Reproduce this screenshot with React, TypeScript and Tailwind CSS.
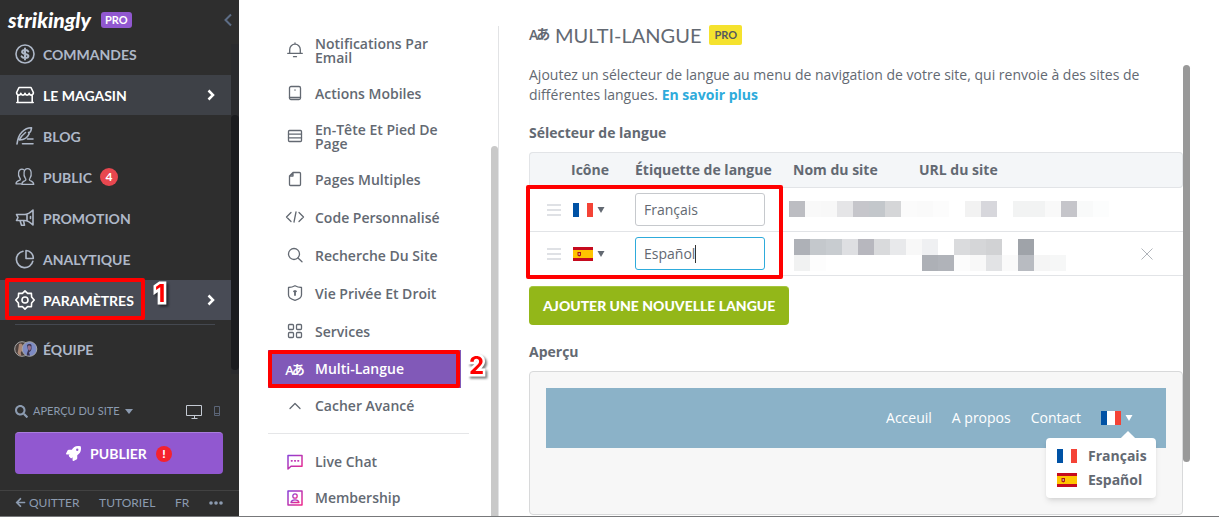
import React, { useState } from 'react';
import { FaArrowLeft, FaRocket, FaSearch } from 'react-icons/fa';

interface NavItem {
  label: string;
  icon: React.ReactNode;
  active?: string;
  count?: number;
}

interface SettingItem {
  label: string;
  icon: React.ReactNode;
}

const line = {
  fill: 'none',
  stroke: 'currentColor',
  strokeWidth: 1.6,
  strokeLinejoin: 'round' as const,
  strokeLinecap: 'round' as const,
};

const thin = { ...line, strokeWidth: 1.3 };

function TranslateIcon() {
  return (
    <span aria-hidden="true" className="font-['Open_Sans','Noto_Sans_CJK_JP',sans-serif] leading-4 font-semibold whitespace-nowrap">
      A<span className="-ml-0.5 align-[1px]">あ</span>
    </span>
  );
}

const navItems: NavItem[] = [
  {
    label: 'COMMANDES',
    icon: (
      <svg width="20" height="20" viewBox="0 0 20 20" {...line}>
        <circle cx="10" cy="10" r="9" />
        <path d="M13.3 7.4c-.5-.9-1.6-1.3-3.1-1.3-1.8 0-3.1.6-3.1 1.9 0 2.8 6.3 1.1 6.3 4 0 1.3-1.4 1.9-3.3 1.9-1.7 0-2.9-.5-3.5-1.5M10 4.400v11.200" strokeWidth="2" />
      </svg>
    ),
  },
  {
    label: 'LE MAGASIN',
    active: 'bg-[#3e4147]',
    icon: (
      <svg width="20" height="20" viewBox="0 0 20 20" {...line}>
        <path d="M4 2.500h12l2.400 5c0 3.200-3.900 3.400-4.200.7-.4 2.500-3.900 2.500-4.200 0-.3 2.500-3.800 2.500-4.200 0C5.500 10.900 1.600 10.700 1.600 7.500zM2.800 10.500v7h14.400v-7M1.800 17.500h16.400" />
      </svg>
    ),
  },
  {
    label: 'BLOG',
    icon: (
      <svg width="20" height="20" viewBox="0 0 20 20" {...line}>
        <path d="M2 18c.5-4 1.500-8.500 5-12 3-3 6.500-4.300 9.500-4.200-.3 1.300-.2 3-1.300 4.200l-1.600.5.6 1.300c-1.500 3.500-5 6-9.700 6.200M4.500 13.500C6 10.500 8 8.500 10.500 6.500M12.500 13H18M7.500 17.800H18" />
      </svg>
    ),
  },
  {
    label: 'PUBLIC',
    count: 4,
    icon: (
      <svg width="20" height="20" viewBox="0 0 20 20" {...thin}>
        <path d="M1 16.800c0-2.300 1.300-2.600 3.800-3.600.8-.4.6-1.500 0-2.200C3.500 9.500 3.300 7 3.600 5.300 4 3.200 5.200 2.200 6.900 2.200c.8 0 1.500.2 2 .7M1 16.800h5" />
        <path d="M6.800 17.400c0-2.800 1.500-3 3.500-3.900.8-.4.7-1.500.1-2.200-1.200-1.500-1.700-4-1.300-6.200.4-2.300 1.700-3.500 3.500-3.500s3.100 1.200 3.500 3.500c.4 2.200-.1 4.700-1.200 6.200-.6.7-.7 1.800.1 2.200 2.200.9 3.700 1.100 3.700 3.900z" />
      </svg>
    ),
  },
  {
    label: 'PROMOTION',
    icon: (
      <svg width="20" height="20" viewBox="0 0 20 20" {...line}>
        <path d="M1.500 6.500h8c3 0 5.500-1.500 8.500-4.500v15c-3-3-5.500-4.500-8.500-4.500h-8l1.500-3zM5 12.500l1.500 4.800h3l-1-4.800M12 6v6.500M15.500 8.500v2" />
      </svg>
    ),
  },
  {
    label: 'ANALYTIQUE',
    icon: (
      <svg width="20" height="20" viewBox="0 0 20 20" {...line}>
        <path d="M8 2.200a8.300 8.300 0 1 0 9.800 10M11 1.500v8h7.300A7.600 7.600 0 0 0 11 1.500z" />
      </svg>
    ),
  },
  {
    label: 'PARAMÈTRES',
    active: 'bg-[#484b55]',
    icon: (
      <svg width="20" height="20" viewBox="0 0 20 20" {...line}>
        <path d="M10 .9l2.600 2.500 3.800-.1.2 3.700 2.600 3-2.600 3-.2 3.700-3.800-.1L10 19.100l-2.600-2.500-3.800.1-.2-3.700L.8 10l2.600-3 .2-3.700 3.800.1z" />
        <circle cx="10" cy="10" r="3" />
      </svg>
    ),
  },
];

const settings: SettingItem[] = [
  {
    label: 'Notifications Par Email',
    icon: (
      <svg width="16" height="16" viewBox="0 0 16 16" {...thin}>
        <path d="M.7 11.300h14.600M2.700 11V7.500a5.300 5.300 0 0 1 10.600 0V11M8 1.800V1M6.500 14.700h3" />
      </svg>
    ),
  },
  {
    label: 'Actions Mobiles',
    icon: (
      <svg width="16" height="16" viewBox="0 0 16 16" {...thin}>
        <rect x="2.500" y="1.500" width="11" height="13" rx="1.500" />
        <path d="M2.500 12.500h11M8 4.800v.4" />
      </svg>
    ),
  },
  {
    label: 'En-Tête Et Pied De Page',
    icon: (
      <svg width="16" height="16" viewBox="0 0 16 16" {...thin}>
        <rect x="1.500" y="2.500" width="13" height="11" rx="1" />
        <path d="M1.500 6.200h13M1.500 9.800h13" />
      </svg>
    ),
  },
  {
    label: 'Pages Multiples',
    icon: (
      <svg width="16" height="16" viewBox="0 0 16 16" {...thin}>
        <path d="M6 1.500h6.500a1 1 0 0 1 1 1v11a1 1 0 0 1-1 1h-9a1 1 0 0 1-1-1V5zM6 1.500V5H2.500" />
      </svg>
    ),
  },
  {
    label: 'Code Personnalisé',
    icon: (
      <svg width="20" height="16" viewBox="0 0 20 16" {...thin}>
        <path d="M6 3.500L1.500 8 6 12.500M14 3.500L18.500 8 14 12.500M11 3L9 13" />
      </svg>
    ),
  },
  {
    label: 'Recherche Du Site',
    icon: (
      <svg width="16" height="16" viewBox="0 0 16 16" {...thin}>
        <circle cx="7" cy="7" r="5.500" />
        <path d="M11 11l4 3.700" />
      </svg>
    ),
  },
  {
    label: 'Vie Privée Et Droit',
    icon: (
      <svg width="16" height="16" viewBox="0 0 16 16" {...thin}>
        <path d="M8 .7c2 1.200 4 1.700 6.500 1.800v7.500c0 2.500-3 4.300-6.500 5.300-3.500-1-6.500-2.800-6.500-5.300V2.500C4 2.400 6 1.900 8 .7z" />
        <path d="M8 6v4M7 6.300h2" strokeWidth="1.800" />
      </svg>
    ),
  },
  {
    label: 'Services',
    icon: (
      <svg width="16" height="16" viewBox="0 0 16 16" {...thin}>
        <rect x="1.500" y="1.500" width="5" height="5" rx="1" />
        <rect x="9.500" y="1.500" width="5" height="5" rx="1" />
        <rect x="1.500" y="9.500" width="5" height="5" rx="1" />
        <rect x="9.500" y="9.500" width="5" height="5" rx="1" />
      </svg>
    ),
  },
];

const extras: SettingItem[] = [
  {
    label: 'Live Chat',
    icon: (
      <svg width="16" height="16" viewBox="0 0 16 16" {...thin} stroke="url(#pink)">
        <path d="M1 15V1.500h14v10.700H4z" strokeWidth="1.500" />
        <path d="M4.500 6.800h.5M7.800 6.800h.5M11 6.800h.5" stroke="#c233b4" strokeWidth="1.700" />
      </svg>
    ),
  },
  {
    label: 'Membership',
    icon: (
      <svg width="16" height="16" viewBox="0 0 16 16" {...thin} stroke="url(#pink)">
        <rect x="1" y="1" width="14" height="14" strokeWidth="1.500" />
        <circle cx="8" cy="6" r="2.200" />
        <path d="M4 12.500c.5-2.300 2-2.700 4-2.700s3.500.4 4 2.700z" />
      </svg>
    ),
  },
];

// Blurred site names and addresses, one colour per 16px block
const blurRows = [
  [
    ['#bcbdc2', '#f9f9f9', '#f8f8f8', '#e5e5e7', '#c6c6cb', '#c3c7cb', '#d5d6d8', '#fbfbfb', '#fafafa', '#fcfcfc', '#fff', '#f2f2f2', '#d7d7dc', '#fff', '#f2f3f3', '#f2f3f3', '#f9f9f9', '#c5c5ca', '#f9fafa', '#fcfdfd'],
  ],
  [
    ['#aeb1b7', '#c4c8cc', '#c8ccd0', '#dedfe2', '#b7b7be', '#d9dadc', '#e8e9eb', '#f8f8f8', '#eff0f2', '#fff', '#dadbdd', '#d5d6d8', '#d1d2d4', '#fff', '#9fa3a9'],
    ['#f1f2f2', '#fdfdfd', '#fff', '#fff', '#fff', '#fff', '#fff', '#fff', '#adb0b6', '#b0b3b9', '#fcfcfc', '#f8f8f8', '#e2e3e5', '#fafafa', '#b8bbc1', '#f5f5f5', '#f6f7f7'],
  ],
];

function Flag({ code }: { code: string }) {
  if (code === 'fr') {
    return (
      <svg width="20" height="14" viewBox="0 0 20 14" shapeRendering="crispEdges">
        <path fill="#fff" d="M0 0h20v14H0z" />
        <path fill="#0052a5" d="M0 0h6v14H0z" />
        <path fill="#f44336" d="M14 0h6v14h-6z" />
      </svg>
    );
  }
  return (
    <svg width="20" height="14" viewBox="0 0 20 14">
      <path fill="#c60b1e" d="M0 0h20v14H0z" />
      <path fill="#ffc400" d="M0 3h20v8H0z" />
      <path fill="#ad1519" d="M4.500 5h3.500v3.500L6.300 9.600 4.500 8.500z" />
      <path fill="#c9a08a" d="M5.500 6h1.500v2H5.500z" />
    </svg>
  );
}

function Caret() {
  return (
    <svg width="8" height="6" viewBox="0 0 8 6" fill="currentColor">
      <path d="M.5 0h7L4 6z" />
    </svg>
  );
}

function Chevron() {
  return (
    <svg width="8" height="12" viewBox="0 0 8 12" fill="none" stroke="currentColor" strokeWidth="2.500">
      <path d="M1.500 1.500L6 6l-4.500 4.500" />
    </svg>
  );
}

function Step({ n }: { n: number }) {
  return (
    <span className="font-['Inter',sans-serif] text-2xl leading-6 font-bold text-[#f00] [-webkit-text-stroke:5px_white] [paint-order:stroke] drop-shadow-[2px_2px_1px_rgba(0,0,0,0.5)]">
      {n}
    </span>
  );
}

function SettingRow({ label, icon }: SettingItem) {
  return (
    <a href="#" className="flex min-h-[38px] items-center pt-[11px] pb-[9px]">
      <span className="-my-1 flex w-[47px] shrink-0 justify-center pb-0.5 pl-[7px]">{icon}</span>
      <span className="max-w-[140px]">{label}</span>
    </a>
  );
}

function Sidebar() {
  return (
    <aside className="flex w-[239px] shrink-0 flex-col bg-[#2e2e2e] font-['Lato',sans-serif] text-[#aeb8c8]">
      <div className="flex h-[34px] shrink-0 items-center pt-1.5 pl-2">
        <a href="#" className="w-[93px] text-[21px] leading-6 font-black text-white italic">
          strikingly
        </a>
        <span className="rounded-[3px] bg-[#9158d0] px-1 text-[11px] leading-4 font-bold text-white">PRO</span>
        <button aria-label="Réduire le menu" className="mr-[7px] ml-auto text-[#5d6d86]">
          <svg width="8" height="14" viewBox="0 0 8 14" fill="none" stroke="currentColor" strokeWidth="2">
            <path d="M7 1.500L1.500 7 7 12.500" />
          </svg>
        </button>
      </div>

      <div className="flex">
        <nav className="flex min-w-0 grow flex-col gap-px">
          {navItems.map((item) => (
            <a
              key={item.label}
              href="#"
              className={`relative flex h-10 items-center gap-2 pl-[15px] text-sm font-bold ${
                item.active ? `${item.active} text-white` : ''
              }`}
            >
              {item.icon}
              <span className="pt-0.5">{item.label}</span>
              {item.count && (
                <span className="flex size-[18px] items-center justify-center rounded-full bg-[#e8474f] text-xs text-white">
                  {item.count}
                </span>
              )}
              {item.active && (
                <span className="mr-4 ml-auto">
                  <Chevron />
                </span>
              )}
              {item.label === 'PARAMÈTRES' && (
                <>
                  <span className="absolute -top-0.5 left-[5px] h-[42px] w-[140px] rounded-[2px] border-4 border-[#f00]" />
                  <span className="absolute top-0.5 left-[155px]">
                    <Step n={1} />
                  </span>
                </>
              )}
            </a>
          ))}
          <hr className="mt-[3px] mr-4 ml-[15px] border-[#444850]" />
          <a href="#" className="flex h-12 items-center gap-[5px] pl-3.5 text-sm font-bold">
            <svg width="24" height="18" viewBox="0 0 24 18">
              <circle cx="8" cy="8" r="7.300" fill="#4b403d" stroke="#a6a6a6" />
              <path d="M5 3c2-1.500 4 0 4 3s-1 4-2 5 1 3 0 4c-3-1-4-3-3-5z" fill="#a98675" />
              <circle cx="15.500" cy="8" r="7.300" fill="#7d8bc4" stroke="#a6a6a6" />
              <path d="M13 4c1-1.500 4-1.500 4.500 0v4c-.5 2-1.500 2.500-2.500 3.500l1 3h-3c-.5-3 1-3.500 1-5.500z" fill="#3a3453" />
              <path d="M14 5c1-1 3-.5 3 1.500S16 10 15 9.500 13.500 6 14 5z" fill="#96708b" />
            </svg>
            ÉQUIPE
          </a>
        </nav>
        <div className="mt-2.5 flex w-2 flex-col bg-[#2a2b2e] pt-[71px]">
          <div className="h-[255px] rounded-full bg-[#1b1c1f]" />
        </div>
      </div>

      <div className="mt-auto flex items-center pr-[18px] pl-[15px] text-[11px] text-[#8c9bb0]">
        <button className="flex items-center gap-[5px]">
          <FaSearch size={13} />
          APERÇU DU SITE
          <svg width="8" height="5" viewBox="0 0 8 5" fill="currentColor">
            <path d="M0 0h8L4 5z" />
          </svg>
        </button>
        <button aria-label="Ordinateur" className="mr-2.5 ml-auto text-[#c4cad3]">
          <svg width="17" height="15" viewBox="0 0 17 15" fill="none" stroke="currentColor">
            <path d="M.5 1.500h15v10H.5zM5.500 14.500h6M8.500 11.500v3" />
          </svg>
        </button>
        <button aria-label="Mobile" className="text-[#5b6577]">
          <svg width="8" height="12" viewBox="0 0 8 12" fill="none" stroke="currentColor">
            <path d="M1.500 1.500h5v9h-5zM1.500 8.500h5" />
          </svg>
        </button>
      </div>
      <button className="mx-[15px] mt-[13px] mr-4 flex h-[42px] shrink-0 items-center justify-center gap-[9px] rounded border-t border-[#a97ddd] bg-[#9158d0] text-sm font-bold text-white">
        <FaRocket size={15} />
        PUBLIER
        <span className="flex size-4 items-center justify-center rounded-full bg-[#f5222d] text-xs font-black">!</span>
      </button>
      <div className="mt-4 flex h-[26px] shrink-0 items-center justify-between border-t border-[#424242] pr-4 pb-0.5 pl-[15px] text-xs text-[#8c9bb0]">
        <a href="#" className="flex items-center gap-[3px]">
          <FaArrowLeft size={11} />
          QUITTER
        </a>
        <a href="#">TUTORIEL</a>
        <a href="#">FR</a>
        <button aria-label="Plus">
          <svg width="14" height="4" viewBox="0 0 14 4" fill="currentColor">
            <circle cx="2" cy="2" r="1.800" />
            <circle cx="7" cy="2" r="1.800" />
            <circle cx="12" cy="2" r="1.800" />
          </svg>
        </button>
      </div>
    </aside>
  );
}

function SettingsMenu() {
  return (
    <div className="relative flex w-[260px] shrink-0 pt-[26px] text-sm leading-[14px] font-semibold text-[#636972]">
      <svg width="0" height="0" className="absolute">
        <linearGradient id="pink" x1="0" y1="0" x2="1" y2="1">
          <stop offset="0" stopColor="#8a3fd6" />
          <stop offset="1" stopColor="#ee2a8b" />
        </linearGradient>
      </svg>
      <nav className="ml-[29px] w-[201px]">
        {settings.map((item) => (
          <SettingRow key={item.label} {...item} />
        ))}
        <div className="relative">
          <a href="#" className="flex h-[38px] w-[193px] items-center bg-[#8159b8] text-white">
            <span className="flex w-[47px] shrink-0 justify-center pl-[7px] text-[13px]">
              <TranslateIcon />
            </span>
            Multi-Langue
          </a>
          <span className="absolute top-0 left-0 h-[38px] w-48 rounded-[2px] border-4 border-[#f00]" />
          <span className="absolute top-1 left-[201px]">
            <Step n={2} />
          </span>
        </div>
        <button className="flex h-9 items-center">
          <span className="flex w-[47px] shrink-0 justify-center pl-[7px]">
            <svg width="12" height="8" viewBox="0 0 12 8" {...thin}>
              <path d="M1 6.500l5-5 5 5" />
            </svg>
          </span>
          Cacher Avancé
        </button>
        <hr className="mt-[9px] mb-2.5 border-[#e5e6e8]" />
        {extras.map((item) => (
          <a key={item.label} href="#" className="flex h-9 items-center">
            <span className="flex w-[47px] shrink-0 justify-center pl-[7px]">{item.icon}</span>
            {item.label}
          </a>
        ))}
      </nav>
      <div className="ml-auto w-2 border-r border-[#e2e3e5] pt-[120px]">
        <div className="h-full w-[7px] rounded-t-full bg-[#c9c9c9]" />
      </div>
    </div>
  );
}

export default function App() {
  const [languages, setLanguages] = useState([
    { code: 'fr', label: 'Français' },
    { code: 'es', label: 'Español' },
  ]);

  function rename(index: number, label: string) {
    setLanguages(languages.map((lang, i) => (i === index ? { ...lang, label } : lang)));
  }

  return (
    <div className="flex h-screen flex-col overflow-hidden border-b border-[#77787a] bg-white font-['Open_Sans',sans-serif] text-sm text-[#636972]">
      <div className="flex min-h-0 grow">
        <Sidebar />
        <SettingsMenu />

        <main className="min-w-0 grow pt-[22px] pl-[30px]">
          <div className="flex h-[26px] items-center">
            <span className="w-[26px] text-sm">
              <TranslateIcon />
            </span>
            <h1 className="font-['Lato',sans-serif] text-xl">MULTI-LANGUE</h1>
            <span className="ml-2 rounded-[2px] bg-[#f5e22e] px-[5px] font-['Lato',sans-serif] text-[11px] leading-5 font-bold text-[#55585e]">
              PRO
            </span>
          </div>

          <div className="mt-[17px] flex">
            <div className="min-w-0 grow">
              <p className="max-w-[640px] leading-5">
                Ajoutez un sélecteur de langue au menu de navigation de votre site, qui renvoie à des sites de
                différentes langues.{' '}
                <a href="#" className="font-bold text-[#2eabdb]">
                  En savoir plus
                </a>
              </p>
              <h2 className="mt-[18px] leading-5 font-bold">Sélecteur de langue</h2>

              <div className="relative mt-[9px]">
                <table className="w-full table-fixed border-separate border-spacing-0">
                  <thead>
                    <tr className="h-9 bg-[#f4f6f8] text-left">
                      <th className="w-[42px] rounded-l border-y border-l border-[#e2e4e7]" />
                      <th className="w-16 border-y border-[#e2e4e7]">Icône</th>
                      <th className="w-[158px] border-y border-[#e2e4e7]">Étiquette de langue</th>
                      <th className="w-[126px] border-y border-[#e2e4e7]">Nom du site</th>
                      <th className="border-y border-[#e2e4e7]">URL du site</th>
                      <th className="w-[42px] rounded-r border-y border-r border-[#e2e4e7]" />
                    </tr>
                  </thead>
                  <tbody>
                    {languages.map((lang, i) => (
                      <tr key={lang.code} className="h-11">
                        <td className="border-b border-[#e2e4e7] pl-[18px] text-[#dfe1e5]">
                          <svg width="14" height="13" viewBox="0 0 14 13" fill="currentColor" shapeRendering="crispEdges">
                            <path d="M0 1h14v2H0zM0 6h14v2H0zM0 11h14v2H0z" />
                          </svg>
                        </td>
                        <td className="border-b border-[#e2e4e7]">
                          <button aria-label="Choisir le drapeau" className="flex items-center gap-1 pl-0.5">
                            <Flag code={lang.code} />
                            <Caret />
                          </button>
                        </td>
                        <td className="border-b border-[#e2e4e7]">
                          <div className="relative w-[130px]">
                            <input
                              aria-label="Étiquette de langue"
                              value={lang.label}
                              onChange={(e) => rename(i, e.target.value)}
                              className={`block h-[33px] w-full rounded-[3px] border bg-white px-2 outline-none ${
                                i === 1 ? 'border-[#2eabdb]' : 'border-[#c6c9cd]'
                              }`}
                            />
                            {i === 1 && <span className="absolute top-2 left-[60px] h-[18px] w-px bg-[#333]" />}
                          </div>
                        </td>
                        <td colSpan={2} className="border-b border-[#e2e4e7]">
                          <div className={i === 0 ? '-ml-1 pb-0.5' : 'ml-px pt-0.5'}>
                            {blurRows[i].map((row, r) => (
                              <div key={r} className="flex">
                                {row.map((color, c) => (
                                  <span key={c} className="size-4 shrink-0" style={{ backgroundColor: color }} />
                                ))}
                              </div>
                            ))}
                          </div>
                        </td>
                        <td className="border-b border-[#e2e4e7] text-[#b0b4ba]">
                          {i > 0 && (
                            <button aria-label="Supprimer" className="block">
                              <svg width="12" height="12" viewBox="0 0 12 12" fill="none" stroke="currentColor">
                                <path d="M.5.5l11 11M11.500.5l-11 11" />
                              </svg>
                            </button>
                          )}
                        </td>
                      </tr>
                    ))}
                  </tbody>
                </table>
                <span className="pointer-events-none absolute top-[33px] -left-[3px] h-[94px] w-[257px] rounded-[2px] border-4 border-[#f00]" />
              </div>

              <button className="mt-2.5 h-[39px] rounded border-t border-[#a5c63f] bg-[#93b719] px-3.5 font-['Lato',sans-serif] text-sm font-black text-white">
                AJOUTER UNE NOUVELLE LANGUE
              </button>

              <h2 className="mt-[17px] leading-5 font-bold">Aperçu</h2>
              <div className="mt-[9px] h-[144px] rounded border border-[#d8d9da] bg-[#f7f7f7] p-4">
                <div className="relative flex h-[60px] items-center justify-end gap-5 bg-[#8bb2c8] pr-[33px] font-medium text-white">
                  <a href="#">Acceuil</a>
                  <a href="#">A propos</a>
                  <a href="#">Contact</a>
                  <button aria-label="Langue" className="flex items-center gap-1">
                    <Flag code="fr" />
                    <Caret />
                  </button>
                  <div className="absolute top-[50px] right-2.5 flex h-[60px] w-[110px] flex-col justify-center rounded bg-white font-bold text-[#636972] shadow-md">
                    <span className="absolute -top-[5px] right-[23px] size-2.5 rotate-45 bg-white" />
                    {languages.map((lang) => (
                      <a key={lang.code} href="#" className="flex h-6 items-center gap-[11px] pl-[11px]">
                        <Flag code={lang.code} />
                        {lang.label}
                      </a>
                    ))}
                  </div>
                </div>
              </div>
            </div>
            <div className="mr-[29px] h-[397px] w-[7px] shrink-0 rounded-full bg-[#999]" />
          </div>
        </main>
      </div>
    </div>
  );
}
